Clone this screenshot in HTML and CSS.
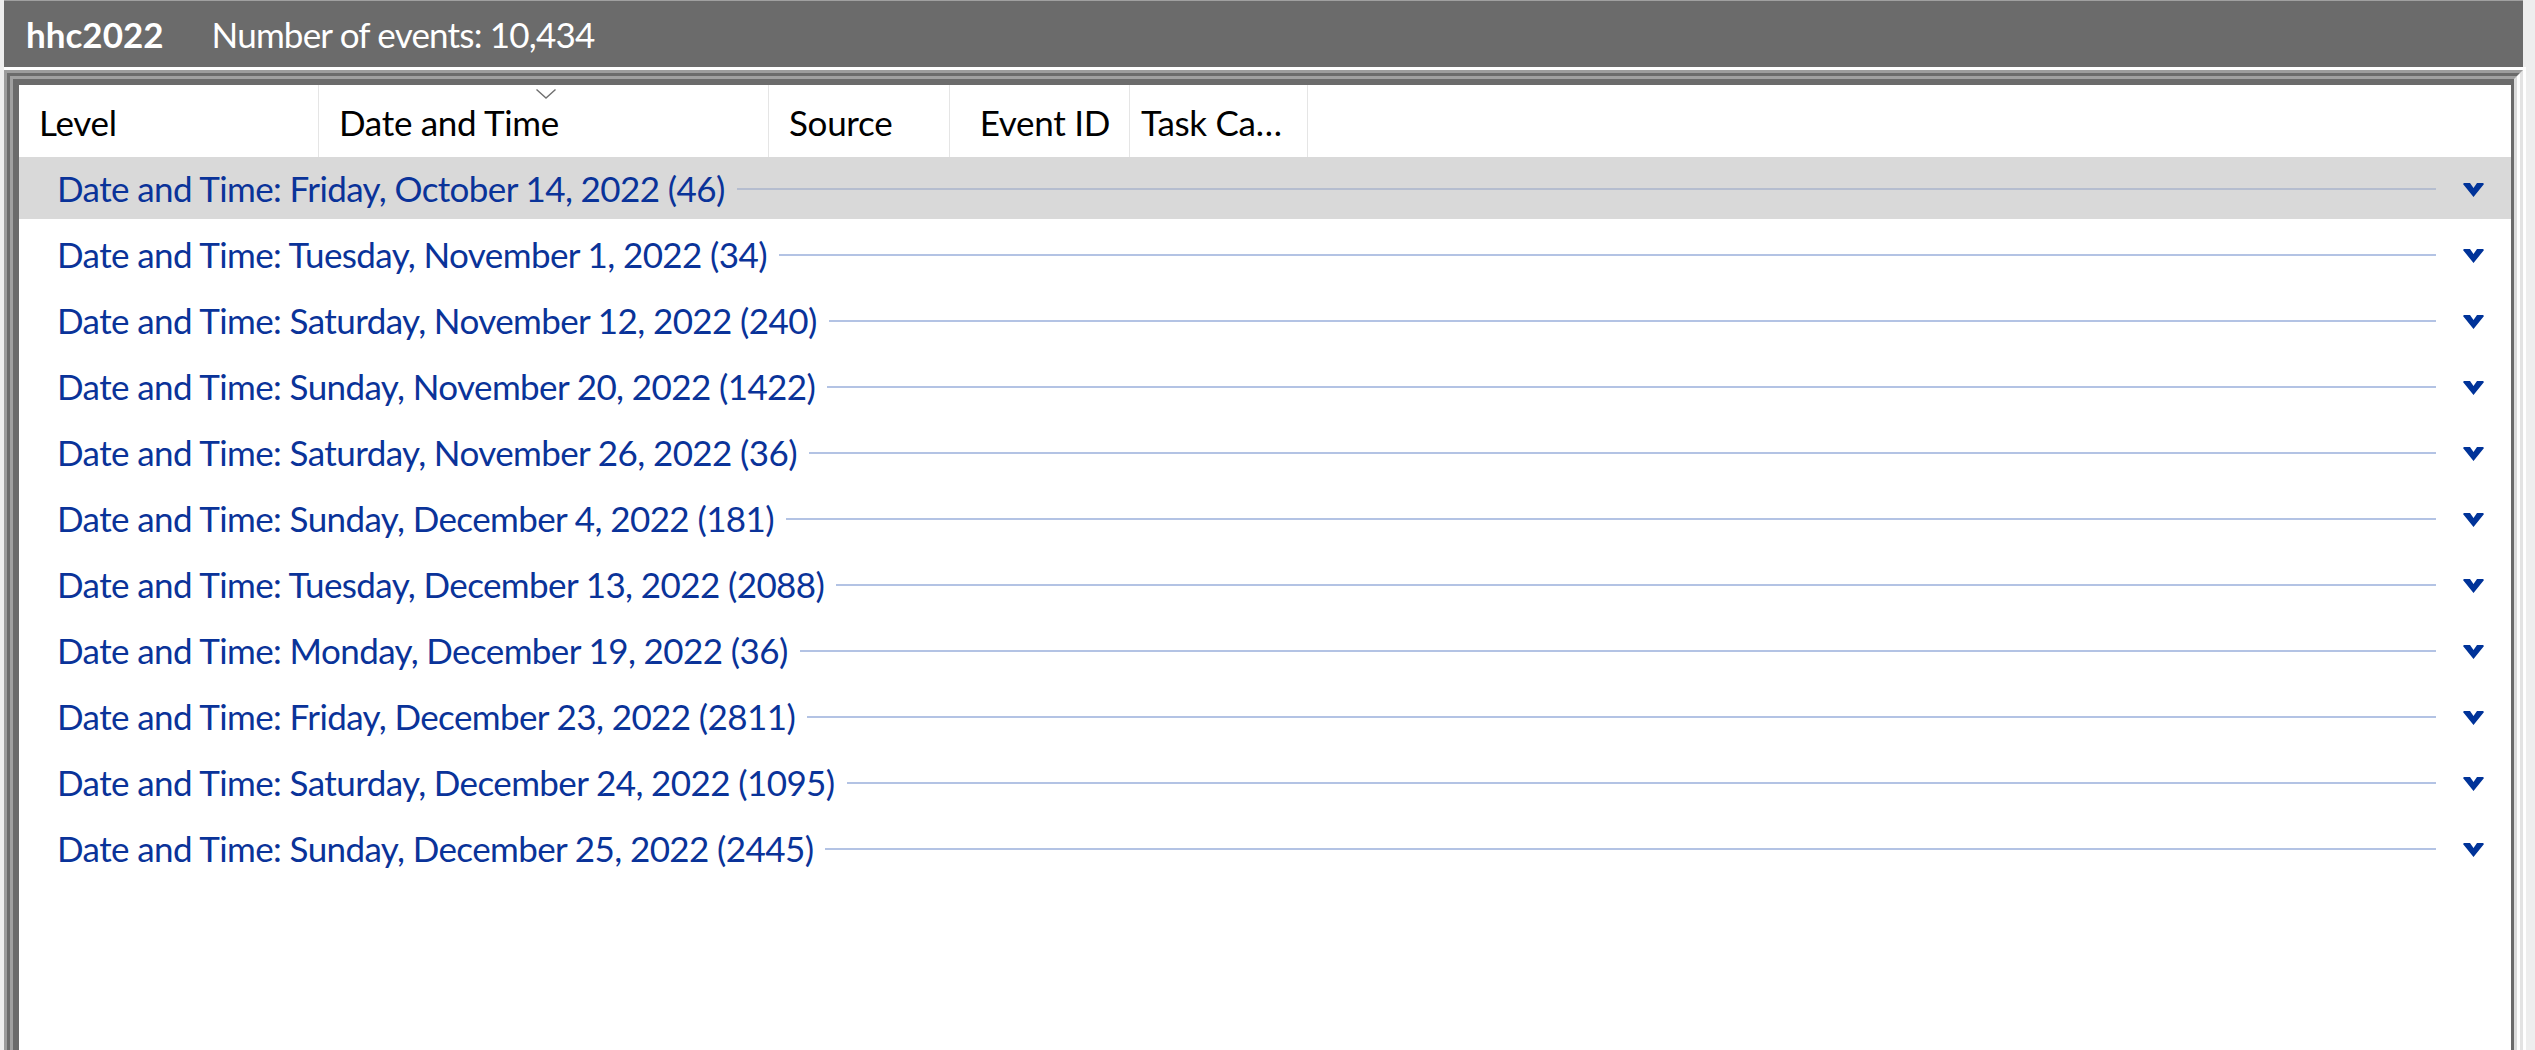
FILE: index.html
```html
<!DOCTYPE html>
<html>
<head>
<meta charset="utf-8">
<title>hhc2022</title>
<link rel="stylesheet" href="styles.css">
</head>
<body>
<div class="topbar">
  <span class="logname">hhc2022</span>
  <span class="count">Number of events: 10,434</span>
</div>
<div class="frame">
  <div class="b1"><div class="b2"><div class="b3"><div class="b4">
    <div class="content">
      <div class="header">
        <div class="col c1">Level</div>
        <div class="col c2">Date and Time
          <svg class="sort" width="20" height="10" viewBox="0 0 20 10"><polyline points="0.5,0.5 10,9 19.5,0.5" fill="none" stroke="#707070" stroke-width="1.4"/></svg>
        </div>
        <div class="col c3">Source</div>
        <div class="col c4">Event ID</div>
        <div class="col c5">Task Ca…</div>
      </div>
      <div class="rows">
        <div class="row sel"><span class="label">Date and Time: Friday, October 14, 2022 (46)</span><span class="rule"></span><svg class="chev" width="21" height="14" viewBox="0 0 21 14"><polygon points="0,1 1,0 7,0 10.5,5 14,0 20,0 21,1 10.5,14"/></svg></div>
        <div class="row"><span class="label">Date and Time: Tuesday, November 1, 2022 (34)</span><span class="rule"></span><svg class="chev" width="21" height="14" viewBox="0 0 21 14"><polygon points="0,1 1,0 7,0 10.5,5 14,0 20,0 21,1 10.5,14"/></svg></div>
        <div class="row"><span class="label">Date and Time: Saturday, November 12, 2022 (240)</span><span class="rule"></span><svg class="chev" width="21" height="14" viewBox="0 0 21 14"><polygon points="0,1 1,0 7,0 10.5,5 14,0 20,0 21,1 10.5,14"/></svg></div>
        <div class="row"><span class="label">Date and Time: Sunday, November 20, 2022 (1422)</span><span class="rule"></span><svg class="chev" width="21" height="14" viewBox="0 0 21 14"><polygon points="0,1 1,0 7,0 10.5,5 14,0 20,0 21,1 10.5,14"/></svg></div>
        <div class="row"><span class="label">Date and Time: Saturday, November 26, 2022 (36)</span><span class="rule"></span><svg class="chev" width="21" height="14" viewBox="0 0 21 14"><polygon points="0,1 1,0 7,0 10.5,5 14,0 20,0 21,1 10.5,14"/></svg></div>
        <div class="row"><span class="label">Date and Time: Sunday, December 4, 2022 (181)</span><span class="rule"></span><svg class="chev" width="21" height="14" viewBox="0 0 21 14"><polygon points="0,1 1,0 7,0 10.5,5 14,0 20,0 21,1 10.5,14"/></svg></div>
        <div class="row"><span class="label">Date and Time: Tuesday, December 13, 2022 (2088)</span><span class="rule"></span><svg class="chev" width="21" height="14" viewBox="0 0 21 14"><polygon points="0,1 1,0 7,0 10.5,5 14,0 20,0 21,1 10.5,14"/></svg></div>
        <div class="row"><span class="label">Date and Time: Monday, December 19, 2022 (36)</span><span class="rule"></span><svg class="chev" width="21" height="14" viewBox="0 0 21 14"><polygon points="0,1 1,0 7,0 10.5,5 14,0 20,0 21,1 10.5,14"/></svg></div>
        <div class="row"><span class="label">Date and Time: Friday, December 23, 2022 (2811)</span><span class="rule"></span><svg class="chev" width="21" height="14" viewBox="0 0 21 14"><polygon points="0,1 1,0 7,0 10.5,5 14,0 20,0 21,1 10.5,14"/></svg></div>
        <div class="row"><span class="label">Date and Time: Saturday, December 24, 2022 (1095)</span><span class="rule"></span><svg class="chev" width="21" height="14" viewBox="0 0 21 14"><polygon points="0,1 1,0 7,0 10.5,5 14,0 20,0 21,1 10.5,14"/></svg></div>
        <div class="row"><span class="label">Date and Time: Sunday, December 25, 2022 (2445)</span><span class="rule"></span><svg class="chev" width="21" height="14" viewBox="0 0 21 14"><polygon points="0,1 1,0 7,0 10.5,5 14,0 20,0 21,1 10.5,14"/></svg></div>
      </div>
    </div>
  </div></div></div></div>
</div>
</body>
</html>
```
FILE: styles.css
```css
html, body {
  margin: 0;
  padding: 0;
  background: #eeeeee;
  overflow: hidden;
  height: 1050px;
}
body {
  font-family: "Lato", "Liberation Sans", sans-serif;
}
.topbar {
  margin: 0 12px 0 4px;
  height: 66px;
  border-top: 1px solid #a0a0a0;
  background: #6b6b6b;
  color: #ffffff;
  display: flex;
  align-items: center;
  padding-left: 22px;
  font-size: 35px;
  line-height: 66px;
}
.logname {
  font-weight: 700;
  margin-right: 48px;
}
.count {
  font-weight: 400;
  letter-spacing: -0.8px;
}
.frame {
  margin: 0 9px 0 4px;
  border-top: 3px solid #ffffff;
  border-right: 3px solid #ffffff;
}
.b1 {
  border-top: 3px solid #9c9c9c;
  border-left: 3px solid #9c9c9c;
  border-right: 3px solid #e3e3e3;
}
.b2 {
  border-top: 3px solid #6b6b6b;
  border-left: 3px solid #6b6b6b;
  border-right: 3px solid #ffffff;
}
.b3 {
  border-top: 3px solid #a0a0a0;
  border-left: 3px solid #a0a0a0;
  border-right: 3px solid #dcdcdc;
}
.b4 {
  border-top: 6px solid #6b6b6b;
  border-left: 6px solid #6b6b6b;
  border-right: 3px solid #6b6b6b;
}
.content {
  background: #ffffff;
  height: 1000px;
}
.header {
  display: flex;
  height: 72px;
  font-size: 35px;
  letter-spacing: -0.3px;
  color: #000000;
}
.col {
  position: relative;
  box-sizing: border-box;
  border-right: 1px solid #e5e5e5;
  line-height: 72px;
  padding-top: 1px;
  white-space: nowrap;
}
.c1 { width: 300px; padding-left: 20px; }
.c2 { width: 450px; padding-left: 20px; }
.c3 { width: 181px; padding-left: 20px; }
.c4 { width: 180px; padding-right: 19px; text-align: right; }
.c5 { width: 178px; padding-left: 11px; }
.sort {
  position: absolute;
  left: 217px;
  top: 4px;
}
.rows {
  display: flex;
  flex-direction: column;
  gap: 4px;
}
.row {
  display: flex;
  align-items: center;
  height: 62px;
  padding-left: 38px;
  font-size: 35px;
  letter-spacing: -0.6px;
  line-height: 62px;
  color: #0a3399;
  white-space: nowrap;
}
.row.sel {
  background: #d9d9d9;
}
.rule {
  flex: 1;
  height: 2px;
  margin: 2px 0 0 12px;
  background: #b3c3e4;
}
.row.sel .rule {
  background: #b5bdcf;
}
.chev {
  margin: 3px 27px 0 27px;
  fill: #003399;
}
```
